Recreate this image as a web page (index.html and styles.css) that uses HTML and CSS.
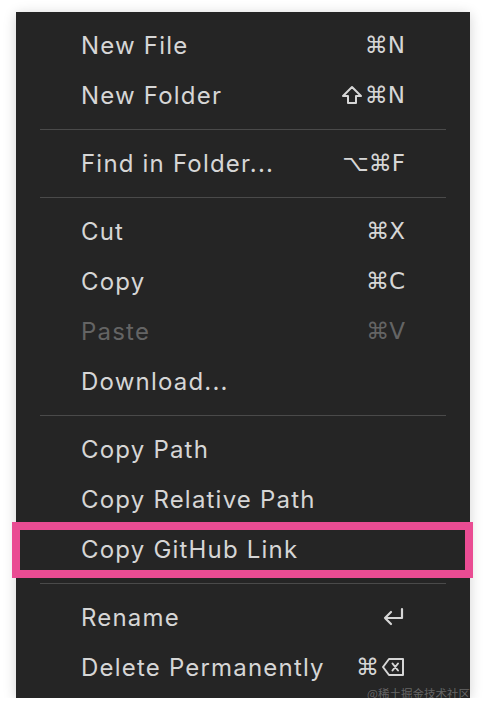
FILE: index.html
```html
<!DOCTYPE html>
<html>
<head>
    <meta charset="UTF-8">
    <meta name="viewport" content="width=device-width, initial-scale=1.0">
    <title>Context Menu</title>
    <link rel="stylesheet" href="styles.css">
</head>
<body>
    <div class="menu">
        <div class="menu-item"><span class="label">New File</span><span class="keys">⌘N</span></div>
        <div class="menu-item">
            <span class="label">New Folder</span>
            <span class="keys">
                <svg class="key-icon" width="22" height="20" viewBox="0 0 22 20"><path d="M11 2 L20 11 L15 11 L15 18 L7 18 L7 11 L2 11 Z" fill="none" stroke="currentColor" stroke-width="2" stroke-linejoin="round"/></svg>⌘N
            </span>
        </div>
        <div class="separator"></div>
        <div class="menu-item"><span class="label">Find in Folder...</span><span class="keys">⌥⌘F</span></div>
        <div class="separator"></div>
        <div class="menu-item"><span class="label">Cut</span><span class="keys">⌘X</span></div>
        <div class="menu-item"><span class="label">Copy</span><span class="keys">⌘C</span></div>
        <div class="menu-item disabled"><span class="label">Paste</span><span class="keys">⌘V</span></div>
        <div class="menu-item"><span class="label">Download...</span></div>
        <div class="separator"></div>
        <div class="menu-item"><span class="label">Copy Path</span></div>
        <div class="menu-item"><span class="label">Copy Relative Path</span></div>
        <div class="menu-item highlighted"><span class="label">Copy GitHub Link</span></div>
        <div class="separator"></div>
        <div class="menu-item">
            <span class="label">Rename</span>
            <span class="keys">
                <svg class="key-icon" width="23" height="20" viewBox="0 0 23 20"><path d="M20 2 V11 H3 M9 5 L3 11 L9 17" fill="none" stroke="currentColor" stroke-width="2.2" stroke-linecap="round" stroke-linejoin="round"/></svg>
            </span>
        </div>
        <div class="menu-item">
            <span class="label">Delete Permanently</span>
            <span class="keys">⌘<svg class="key-icon" width="24" height="20" viewBox="0 0 24 20"><path d="M8 2 H22 V18 H8 L2 10 Z" fill="none" stroke="currentColor" stroke-width="2" stroke-linejoin="round"/><path d="M11.5 6.5 L17 13.5 M17 6.5 L11.5 13.5" fill="none" stroke="currentColor" stroke-width="2" stroke-linecap="round"/></svg></span>
        </div>
        <div class="watermark">@稀土掘金技术社区</div>
    </div>
</body>
</html>
```

FILE: styles.css
```css
body {
    margin: 0;
    background-color: #ffffff;
    font-family: Inter, "Noto Sans", sans-serif;
}

.menu {
    position: relative;
    width: 454px;
    margin: 12px 0 0 16px;
    padding: 8px 0 6px 0;
    background-color: #252525;
    box-shadow: 0 2px 12px rgba(0, 0, 0, 0.18);
    box-sizing: border-box;
}

.menu-item {
    display: flex;
    align-items: center;
    justify-content: space-between;
    height: 50px;
    padding: 0 65px 0 65px;
    font-size: 24px;
    letter-spacing: 1.2px;
    color: #d6d6d6;
}

.menu-item.disabled {
    color: #646464;
}

.keys {
    display: flex;
    align-items: center;
    gap: 2px;
    font-family: "DejaVu Sans", sans-serif;
    font-size: 23px;
    letter-spacing: 0;
}

.key-icon {
    display: block;
}

.menu-item.highlighted {
    position: relative;
}

.menu-item.highlighted::after {
    content: "";
    position: absolute;
    left: -4px;
    right: -3px;
    top: -2px;
    bottom: -4px;
    border: 8px solid #ea4c93;
}

.separator {
    height: 1px;
    margin: 9px 24px 8px 24px;
    background-color: #4a4a4a;
}

.watermark {
    position: absolute;
    right: 0;
    bottom: -3px;
    font-family: "Noto Sans CJK SC", sans-serif;
    font-size: 11.5px;
    color: rgba(255, 255, 255, 0.3);
}
```
